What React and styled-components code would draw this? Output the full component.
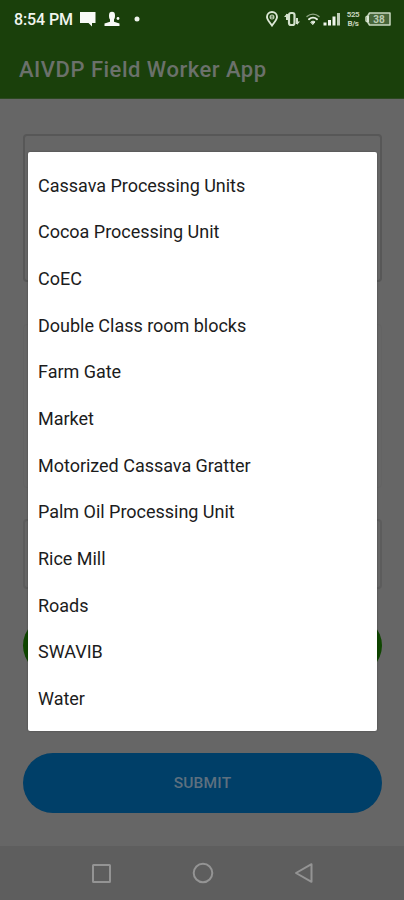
import React from "react";
import styled, { createGlobalStyle } from "styled-components";

const GlobalStyle = createGlobalStyle`
  * {
    box-sizing: border-box;
  }
  body {
    margin: 0;
    background: #666666;
    font-family: Roboto, "Liberation Sans", sans-serif;
  }
`;

const Screen = styled.div`
  position: relative;
  width: 404px;
  height: 900px;
  overflow: hidden;
  display: flex;
  flex-direction: column;
  background: #666666;
`;
const Header = styled.header`
  height: 99px;
  flex-shrink: 0;
  background: #1a400b;
  border-bottom: 1px solid #2c4821;
`;
const StatusBar = styled.div`
  height: 38px;
  padding: 0 13px 0 14px;
  display: flex;
  align-items: center;
  justify-content: space-between;
  color: #f1f5ef;
`;
const Clock = styled.span`
  width: 59px;
  font-size: 16px;
  line-height: 38px;
  font-weight: 500;
  letter-spacing: -0.1px;
  white-space: nowrap;
  padding-top: 1px;
`;
const StatusIcons = styled.div`
  display: flex;
  align-items: center;
  gap: ${({ $gap }) => $gap || 0}px;
`;
const NetSpeed = styled.div`
  width: 14px;
  margin: 0 5px;
  font-size: 8px;
  line-height: 9px;
  font-weight: 700;
  text-align: center;
  letter-spacing: -0.4px;
  color: #c4d3bc;
`;
const Title = styled.h1`
  margin: 0;
  padding-left: 19px;
  font-size: 22px;
  line-height: 63px;
  font-weight: 500;
  letter-spacing: 0.5px;
  color: #6b716b;
`;
const Form = styled.main`
  flex: 1;
  padding: 35px 22px 0 23px;
  display: flex;
  flex-direction: column;
`;
const Field = styled.div`
  flex-shrink: 0;
  height: ${({ $height }) => $height}px;
  margin-bottom: ${({ $gap }) => $gap}px;
  border: ${({ $thin }) => ($thin ? 1 : 2)}px solid ${({ $line }) => $line};
  border-radius: 4px;
`;
const PillButton = styled.button`
  flex-shrink: 0;
  height: ${({ $height }) => $height}px;
  margin-bottom: ${({ $gap }) => $gap || 0}px;
  padding: 0;
  border: 0;
  border-radius: 30px;
  background: ${({ $color }) => $color};
  font-family: inherit;
  font-size: 15.5px;
  font-weight: 500;
  letter-spacing: 0.2px;
  color: #5d707f;
`;
const NavBar = styled.nav`
  height: 54px;
  flex-shrink: 0;
  padding: 0 90px 0 91px;
  display: flex;
  align-items: center;
  justify-content: space-between;
  background: #5e5e5e;
`;
const Overlay = styled.div`
  position: absolute;
  inset: 0;
  padding: 152px 27px 0 28px;
`;
const Menu = styled.ul`
  margin: 0;
  padding: 9px 0 10px;
  list-style: none;
  background: #ffffff;
  border-radius: 2px;
  box-shadow: 0 0 2px rgba(0, 0, 0, 0.35);
`;
const MenuItem = styled.li`
  height: 46.67px;
  padding: 2px 10px 0;
  display: flex;
  align-items: center;
  font-size: 18px;
  letter-spacing: -0.02px;
  color: #1c1c1c;
`;

const options = [
  "Cassava Processing Units",
  "Cocoa Processing Unit",
  "CoEC",
  "Double Class room blocks",
  "Farm Gate",
  "Market",
  "Motorized Cassava Gratter",
  "Palm Oil Processing Unit",
  "Rice Mill",
  "Roads",
  "SWAVIB",
  "Water",
];

const MessageIcon = () => (
  <svg width="17" height="16" viewBox="0 0 17 16" fill="#f8faf7">
    <path d="M0 1h15.500v11H12v3.500L8.500 12H0z" />
  </svg>
);

const PersonIcon = () => (
  <svg width="17" height="16" viewBox="0 0 17 16" fill="#f8faf7">
    <path d="M5 4.500C5 1.800 6 .8 8 .8s3 1 3 3.700c0 2-.3 3.200-1 4v2.300l5.500 1.700V15H.5v-2.500L6 10.800V8.500c-.7-.8-1-2-1-4z" />
    <circle cx="14" cy="7.500" r="1.400" />
  </svg>
);

const LocationIcon = () => (
  <svg width="12" height="16" viewBox="0 0 12 16">
    <path
      d="M6 14.500C4 11.500 1 9 1 6a5 5 0 0 1 10 0c0 3-3 5.500-5 8.500z"
      fill="none"
      stroke="#dce8d6"
      strokeWidth="1.900"
    />
    <circle cx="6" cy="6" r="2.500" fill="#b7c8ae" />
    <path d="M5 5.200h2M5 7h2" stroke="#315022" strokeWidth="0.800" />
  </svg>
);

const VibrateIcon = () => (
  <svg width="16" height="16" viewBox="0 0 16 16" fill="none" stroke="#d3e1cc">
    <rect x="5" y="2" width="5.500" height="12" rx="2" strokeWidth="2.200" />
    <path d="M3 3v6M13 7v6" strokeWidth="2" />
    <path d="M0 6l3-3.500V6zM16 10.500l-3 3.500v-3.500z" fill="#d3e1cc" stroke="none" />
  </svg>
);

const WifiIcon = () => (
  <svg width="14" height="14" viewBox="0 0 14 14" fill="none" strokeLinecap="round">
    <path d="M1 4.500c3.500-3.200 8.500-3.200 12 0" stroke="#8ea584" strokeWidth="1.400" />
    <path d="M3 7.200c2.300-2 5.700-2 8 0" stroke="#e7efe3" strokeWidth="2" />
    <path d="M5 9.900c1.200-1 2.800-1 4 0L7 12.300z" fill="#e7efe3" stroke="#e7efe3" />
  </svg>
);

const SignalIcon = () => (
  <svg width="18" height="14" viewBox="0 0 18 14" fill="#f0f5ed">
    <rect x="0.500" y="10.500" width="3" height="3" />
    <rect x="5" y="8" width="3" height="5.500" />
    <rect x="9.500" y="4.500" width="3" height="9" />
    <rect x="14" y="1" width="3" height="12.500" fill="#c0cfb8" />
  </svg>
);

const BatteryIcon = () => (
  <svg width="26" height="16" viewBox="0 0 26 16">
    <path d="M4 2h21v12H4V11H1V5h3z" fill="#48663a" />
    <path
      d="M4.500 2H25v12H4.500L3 11.500 1 10V6l2-1.500z"
      fill="none"
      stroke="#c8d8c0"
      strokeWidth="1.500"
      strokeLinejoin="round"
    />
    <path d="M3 5v6" stroke="#dce8d6" strokeWidth="2" />
    <text
      x="14"
      y="11.500"
      textAnchor="middle"
      fontFamily="Roboto, sans-serif"
      fontSize="10"
      fontWeight="700"
      fill="#bccdb3"
    >
      38
    </text>
  </svg>
);

const App = () => {
  return (
    <>
      <GlobalStyle />
      <Screen>
        <Header>
          <StatusBar>
            <StatusIcons $gap={7}>
              <Clock>8:54 PM</Clock>
              <MessageIcon />
              <PersonIcon />
              <svg width="16" height="16" viewBox="0 0 16 16">
                <circle cx="9" cy="8" r="2.500" fill="#eef3ec" />
              </svg>
            </StatusIcons>
            <StatusIcons>
              <StatusIcons $gap={6}>
                <LocationIcon />
                <VibrateIcon />
                <WifiIcon />
              </StatusIcons>
              <svg width="3" height="1" />
              <SignalIcon />
              <NetSpeed>
                525
                <br />
                B/s
              </NetSpeed>
              <BatteryIcon />
            </StatusIcons>
          </StatusBar>
          <Title>AIVDP Field Worker App</Title>
        </Header>
        <Form>
          <Field $height={148} $gap={42} $line="#575757" />
          <Field $height={164} $gap={31} $line="#636363" $thin />
          <Field $height={70} $gap={27} $line="#5c5c5c" />
          <PillButton $height={59} $gap={78} $color="#0f4600" />
          <PillButton $height={60} $color="#003f68">
            SUBMIT
          </PillButton>
        </Form>
        <NavBar>
          <svg width="20" height="20" viewBox="0 0 20 20" fill="none" stroke="#949494" strokeWidth="2">
            <rect x="2" y="2" width="17" height="17" rx="0.500" />
          </svg>
          <svg width="22" height="22" viewBox="0 0 22 22" fill="none" stroke="#949494" strokeWidth="2">
            <circle cx="11" cy="11" r="9.300" />
          </svg>
          <svg width="20" height="22" viewBox="0 0 20 22" fill="none" stroke="#949494" strokeWidth="2">
            <path d="M2 11 17.500 2.200v17.600z" strokeLinejoin="round" />
          </svg>
        </NavBar>
        <Overlay>
          <Menu role="listbox">
            {options.map((option) => (
              <MenuItem key={option} role="option">
                {option}
              </MenuItem>
            ))}
          </Menu>
        </Overlay>
      </Screen>
    </>
  );
};

export default App;
